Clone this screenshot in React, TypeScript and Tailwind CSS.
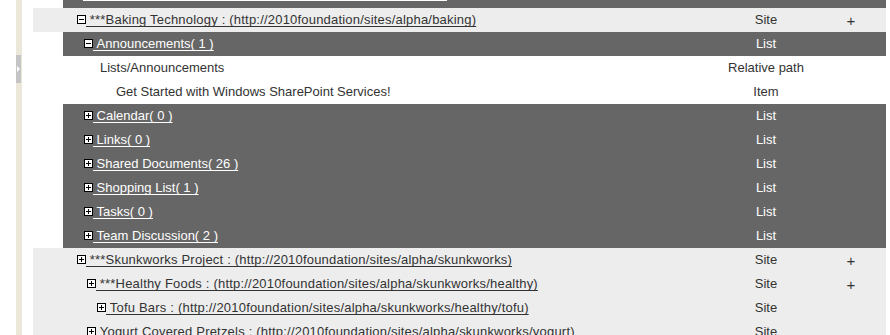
import React from "react";

function Box({ plus }: { plus?: boolean }) {
  return (
    <svg width="9" height="9" viewBox="0 0 9 9" className="relative -top-px block shrink-0">
      <rect x="0.5" y="0.5" width="8" height="8" fill="white" stroke="black" />
      <path d="M2 4.5h5" stroke="black" />
      {plus && <path d="M4.5 2v5" stroke="black" />}
    </svg>
  );
}

type RowProps = {
  bg: string;
  pad: string;
  icon?: "plus" | "minus";
  text: string;
  type: string;
  plus?: boolean;
  dark?: boolean;
  link?: boolean;
  wide?: boolean;
};

function Row({ bg, pad, icon, text, type, plus, dark, link = true, wide }: RowProps) {
  const color = dark ? "text-white" : "text-[#333]";
  return (
    <div className={`flex h-6 shrink-0 items-center ${bg} ${color}`}>
      <div className={`flex min-w-0 flex-1 items-center whitespace-nowrap ${pad}`}>
        {icon && <Box plus={icon === "plus"} />}
        {link ? (
          <span className={`underline underline-offset-2 decoration-1 ${wide ? "tracking-[0.2px]" : ""}`}>
            {"\u00a0" + text}
          </span>
        ) : (
          <span>{text}</span>
        )}
      </div>
      <div className="w-[100px] text-center">{type}</div>
      <div className="w-[70px] text-center text-[15px] leading-none">{plus ? "+" : ""}</div>
    </div>
  );
}

export default function App() {
  const lists = [
    "Calendar( 0 )",
    "Links( 0 )",
    "Shared Documents( 26 )",
    "Shopping List( 1 )",
    "Tasks( 0 )",
    "Team Discussion( 2 )",
  ];
  return (
    <div className="flex h-[335px] overflow-hidden bg-white font-['Liberation_Sans',Arial,sans-serif] text-[13px]">
      <div className="w-4 shrink-0" />
      <div className="relative w-[6px] shrink-0 bg-[#ebe8d9]">
        <div className="absolute left-0 top-[55px] flex h-[28px] w-[5px] items-center justify-center bg-[#c4c4c4]">
          <svg width="3" height="6" viewBox="0 0 3 6">
            <path d="M0 0l3 3-3 3z" fill="white" />
          </svg>
        </div>
      </div>
      <div className="w-[11px] shrink-0" />
      <div className="flex w-[853px] shrink-0 flex-col">
        <div className="relative ml-[30px] h-2 shrink-0 bg-[#666]">
          <div className="absolute left-[20px] top-0 h-px w-[364px] bg-white" />
        </div>
        <Row
          bg="bg-[#ededed]"
          pad="pl-[44px]"
          icon="minus"
          text="***Baking Technology : (http://2010foundation/sites/alpha/baking)"
          type="Site"
          plus
          wide
        />
        <div className="ml-[30px] flex shrink-0 flex-col">
          <Row bg="bg-[#666]" pad="pl-[21px]" icon="minus" text="Announcements( 1 )" type="List" dark />
          <Row bg="bg-white" pad="pl-[37px]" text="Lists/Announcements" type="Relative path" link={false} />
          <Row
            bg="bg-white"
            pad="pl-[53px]"
            text="Get Started with Windows SharePoint Services!"
            type="Item"
            link={false}
          />
          {lists.map((l) => (
            <Row key={l} bg="bg-[#666]" pad="pl-[21px]" icon="plus" text={l} type="List" dark />
          ))}
        </div>
        <Row
          bg="bg-[#ededed]"
          pad="pl-[44px]"
          icon="plus"
          text="***Skunkworks Project : (http://2010foundation/sites/alpha/skunkworks)"
          type="Site"
          plus
          wide
        />
        <Row
          bg="bg-[#ededed]"
          pad="pl-[54px]"
          icon="plus"
          text="***Healthy Foods : (http://2010foundation/sites/alpha/skunkworks/healthy)"
          type="Site"
          plus
          wide
        />
        <Row
          bg="bg-[#ededed]"
          pad="pl-[64px]"
          icon="plus"
          text="Tofu Bars : (http://2010foundation/sites/alpha/skunkworks/healthy/tofu)"
          type="Site"
          wide
        />
        <Row
          bg="bg-[#ededed]"
          pad="pl-[54px]"
          icon="plus"
          text="Yogurt Covered Pretzels : (http://2010foundation/sites/alpha/skunkworks/yogurt)"
          type="Site"
          wide
        />
      </div>
    </div>
  );
}
